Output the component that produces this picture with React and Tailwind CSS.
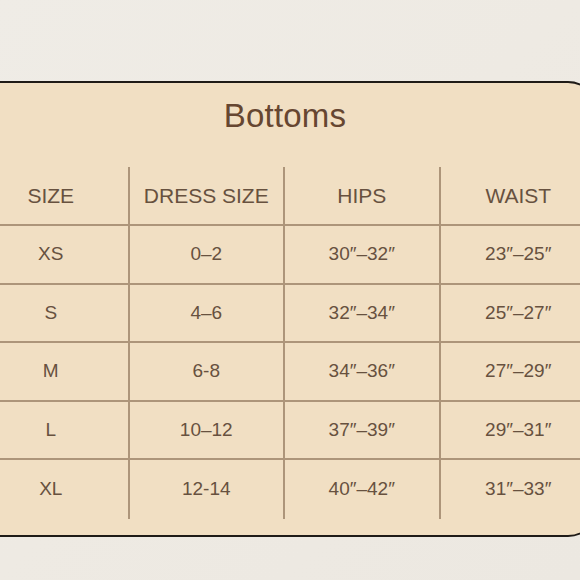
// App.jsx
const rows = [
  ["XS", "0–2", "30″–32″", "23″–25″"],
  ["S", "4–6", "32″–34″", "25″–27″"],
  ["M", "6-8", "34″–36″", "27″–29″"],
  ["L", "10–12", "37″–39″", "29″–31″"],
  ["XL", "12-14", "40″–42″", "31″–33″"],
];

const headers = ["SIZE", "DRESS SIZE", "HIPS", "WAIST"];

const Cell = ({ children, last, header }) => (
  <div
    className={`flex items-center justify-center ${
      last ? "" : "border-r-2 border-[#ad957a]"
    } ${header ? "text-[21px]" : "text-[19px]"}`}
  >
    {children}
  </div>
);

const App = () => {
  return (
    <div
      className="h-[580px] w-[580px] overflow-hidden bg-gradient-to-br from-[#efece6] via-[#eeeae3] to-[#ece8e1] pt-[81px]"
      style={{ fontFamily: '"Liberation Sans", Arial, sans-serif' }}
    >
      <div className="ml-[-28px] h-[456px] w-[626px] rounded-[30px] border-2 border-[#1f1b17] bg-[#f1dfc3] text-[#67513f]">
        <div className="flex h-[84px] items-start justify-center pt-[16px]">
          <h2 className="text-[33px] leading-none tracking-[0.2px] text-[#664631]">
            Bottoms
          </h2>
        </div>

        <div className="grid h-[59px] grid-cols-4 border-b-2 border-[#ad957a]">
          {headers.map((h, i) => (
            <Cell key={h} header last={i === headers.length - 1}>
              {h}
            </Cell>
          ))}
        </div>

        {rows.map((row, r) => (
          <div
            key={row[0]}
            className={`grid h-[58.5px] grid-cols-4 ${
              r === rows.length - 1 ? "" : "border-b-2 border-[#ad957a]"
            }`}
          >
            {row.map((v, i) => (
              <Cell key={i} last={i === row.length - 1}>
                {v}
              </Cell>
            ))}
          </div>
        ))}
      </div>
    </div>
  );
};

export default App;
